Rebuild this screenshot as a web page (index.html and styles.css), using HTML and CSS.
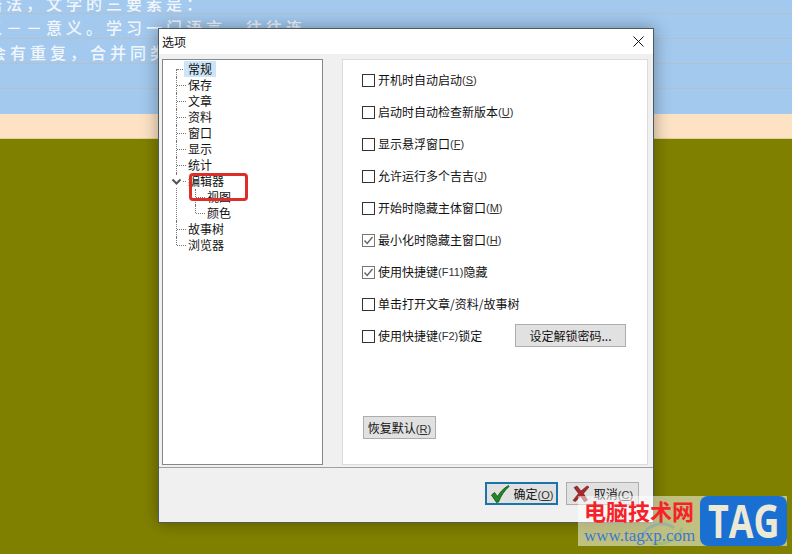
FILE: index.html
```html
<!DOCTYPE html>
<html lang="zh-CN">
<head>
    <meta charset="UTF-8">
    <title>选项</title>
    <link rel="stylesheet" href="styles.css">
</head>
<body>
    <div class="sky">
        <div class="line line-first"><span class="line-text">语法，文学的三要素是：</span></div>
        <div class="line"><span class="line-text">义－－意义。学习一门语言，往往连</span></div>
        <div class="line"><span class="line-text indent">会有重复，合并同类</span></div>
        <div class="line"></div>
    </div>
    <div class="peach"></div>
    <div class="olive"></div>

    <div class="dialog">
        <div class="titlebar">
            <span>选项</span>
            <svg class="close" width="11" height="11" viewBox="0 0 11 11"><path d="M0.5 0.5L10.5 10.5M10.5 0.5L0.5 10.5" stroke="#111" stroke-width="1" fill="none"/></svg>
        </div>
        <div class="dialog-body">
            <div class="tree-box">
                <ul class="tree">
                    <li><span class="node selected">常规</span></li>
                    <li><span class="node">保存</span></li>
                    <li><span class="node">文章</span></li>
                    <li><span class="node">资料</span></li>
                    <li><span class="node">窗口</span></li>
                    <li><span class="node">显示</span></li>
                    <li><span class="node">统计</span></li>
                    <li>
                        <svg class="chevron" width="11" height="11" viewBox="0 0 11 11"><path d="M1.5 3.5L5.5 7.5L9.5 3.5" stroke="#555" stroke-width="2" fill="none"/></svg>
                        <span class="node">编辑器</span>
                        <ul class="sub">
                            <li><span class="node">视图</span></li>
                            <li><span class="node">颜色</span></li>
                        </ul>
                    </li>
                    <li><span class="node">故事树</span></li>
                    <li><span class="node">浏览器</span></li>
                </ul>
                <div class="annotation"></div>
            </div>
            <div class="panel">
                <div class="option"><span class="box"></span>开机时自动启动<span class="key">(<u>S</u>)</span></div>
                <div class="option"><span class="box"></span>启动时自动检查新版本<span class="key">(<u>U</u>)</span></div>
                <div class="option"><span class="box"></span>显示悬浮窗口<span class="key">(<u>F</u>)</span></div>
                <div class="option"><span class="box"></span>允许运行多个吉吉<span class="key">(<u>J</u>)</span></div>
                <div class="option"><span class="box"></span>开始时隐藏主体窗口<span class="key">(<u>M</u>)</span></div>
                <div class="option"><span class="box on"><svg width="11" height="11" viewBox="0 0 11 11"><path d="M1.5 5.5L4.2 8.5L9.5 2" stroke="#666" stroke-width="1.4" fill="none"/></svg></span>最小化时隐藏主窗口<span class="key">(<u>H</u>)</span></div>
                <div class="option"><span class="box on"><svg width="11" height="11" viewBox="0 0 11 11"><path d="M1.5 5.5L4.2 8.5L9.5 2" stroke="#666" stroke-width="1.4" fill="none"/></svg></span>使用快捷键<span class="key">(F11)</span>隐藏</div>
                <div class="option"><span class="box"></span>单击打开文章/资料/故事树</div>
                <div class="option">
                    <span class="box"></span>使用快捷键<span class="key">(F2)</span>锁定
                    <button class="btn btn-password">设定解锁密码...</button>
                </div>
                <button class="btn btn-reset"><span>恢复默认<span class="key">(<u>R</u>)</span></span></button>
            </div>
        </div>
        <div class="footer">
            <button class="btn btn-footer btn-default">
                <svg width="20" height="18" viewBox="0 0 20 18"><path d="M1.5 10L4.5 7.5L7.5 11.5C10 7 13.5 3.5 18.5 0.5L19 1.5C14.5 5.5 11 10.5 8.5 17L6.5 17.5Z" fill="#1f8a22" stroke="#0c4a10" stroke-width="0.8"/></svg>
                <span>确定<span class="key">(<u>O</u>)</span></span>
            </button>
            <button class="btn btn-footer">
                <svg width="18" height="18" viewBox="0 0 18 18"><path d="M2 2.5L5 1L9 6L15 1L17 2L11.5 8.5L15.5 15L12.5 17L8.5 11L3.5 16.5L1 15.5L6.5 8.5Z" fill="#a8282c" stroke="#5e1a1c" stroke-width="0.6"/></svg>
                <span>取消<span class="key">(<u>C</u>)</span></span>
            </button>
        </div>
    </div>

    <div class="watermark">
        <svg class="wm-swirl" width="50" height="30" viewBox="0 0 50 30"><path d="M4 22C8 8 26 4 36 12" stroke="#5b9bd5" stroke-width="3" fill="none" opacity="0.35"/><path d="M14 27C26 30 40 24 44 12" stroke="#6fb56f" stroke-width="3" fill="none" opacity="0.35"/></svg>
        <div class="wm-text">
            <div class="wm-title">电脑技术网</div>
            <div class="wm-url">www.tagxp.com</div>
        </div>
        <div class="wm-badge"><span>TAG</span></div>
    </div>
</body>
</html>
```

FILE: styles.css
```css
html, body {
    margin: 0;
    height: 100%;
}

body {
    width: 792px;
    height: 554px;
    overflow: hidden;
    position: relative;
    display: flex;
    flex-direction: column;
    font-family: "Noto Sans CJK SC", "Liberation Sans", sans-serif;
    font-size: 12px;
    color: #111;
}

/* Background document */
.sky {
    height: 114px;
    flex: none;
    background-color: #a3c9ee;
    overflow: hidden;
}

.line {
    box-sizing: border-box;
    height: 25px;
    border-bottom: 1px solid #b4c0cc;
    white-space: nowrap;
    overflow: hidden;
}

.line-first {
    height: 14px;
}

.line-text {
    display: block;
    margin-top: 1px;
    margin-left: -14px;
    color: #fff;
    opacity: 0.85;
    font-size: 16px;
    font-weight: 500;
    letter-spacing: 4px;
    line-height: 24px;
}

.line-first .line-text {
    margin-top: -9px;
}

.line-text.indent {
    margin-left: -10px;
}

.peach {
    height: 25px;
    flex: none;
    background-color: #fde2c4;
    border-bottom: 1px solid #d8d49a;
    box-sizing: border-box;
}

.olive {
    flex: 1;
    background-color: #808000;
}

/* Options dialog */
.dialog {
    position: absolute;
    left: 158px;
    top: 28px;
    box-sizing: border-box;
    width: 496px;
    height: 495px;
    background-color: #f0f0f0;
    border: 1px solid #4d5a60;
    box-shadow: 0 0 16px rgba(0, 0, 0, 0.35);
    display: flex;
    flex-direction: column;
}

.titlebar {
    height: 25px;
    flex: none;
    background-color: #fff;
    display: flex;
    align-items: center;
    justify-content: space-between;
    padding: 0 9px 0 3px;
}

.dialog-body {
    display: flex;
    gap: 19px;
    padding: 5px 0 0 3px;
}

.tree-box {
    box-sizing: border-box;
    position: relative;
    width: 161px;
    height: 406px;
    background-color: #fff;
    border: 1px solid #828790;
}

.tree, .sub {
    list-style: none;
    margin: 0;
}

.tree {
    padding: 1px 0 0 13px;
}

.sub {
    padding: 0 0 0 19px;
}

.tree li {
    position: relative;
}

.tree li::after {
    content: "";
    position: absolute;
    left: 0;
    top: 0;
    height: 100%;
    border-left: 1px dotted #777;
}

.tree > li:first-child::after {
    top: 8px;
    height: calc(100% - 8px);
}

.tree > li:last-child::after,
.sub > li:last-child::after {
    height: 8px;
}

.node {
    position: relative;
    display: block;
    width: fit-content;
    height: 16px;
    line-height: 16px;
    margin-left: 8px;
    padding: 0 4px;
    white-space: nowrap;
}

.node::before {
    content: "";
    position: absolute;
    left: -7px;
    top: 8px;
    width: 9px;
    border-top: 1px dotted #777;
}

.node.selected {
    background-color: #cce4f7;
}

.node.selected::before {
    width: 6px;
}

.chevron {
    position: absolute;
    left: -5px;
    top: 3px;
    z-index: 1;
    background-color: #fff;
}

.annotation {
    position: absolute;
    left: 26px;
    top: 113px;
    box-sizing: border-box;
    width: 59px;
    height: 28px;
    border: 3px solid #dc2f2b;
    border-radius: 4px;
}

.panel {
    box-sizing: border-box;
    width: 306px;
    height: 406px;
    background-color: #fff;
    border: 1px solid #dcdcdc;
    padding: 12px 21px 0 19px;
    display: flex;
    flex-direction: column;
    gap: 17px;
}

.option {
    display: flex;
    align-items: center;
    height: 15px;
    white-space: nowrap;
}

.box {
    box-sizing: border-box;
    flex: none;
    width: 13px;
    height: 13px;
    margin-top: 1px;
    margin-right: 3px;
    border: 1px solid #333;
    background-color: #fff;
}

.box.on {
    border-color: #777;
}

.box svg {
    display: block;
}

.key {
    font-family: "Liberation Sans", sans-serif;
    font-size: 11px;
    color: #333;
}

.btn {
    box-sizing: border-box;
    height: 23px;
    padding: 0;
    background-color: #e1e1e1;
    border: 1px solid #adadad;
    font-family: inherit;
    font-size: 12px;
    color: #111;
    display: flex;
    align-items: center;
    justify-content: center;
}

.btn-password {
    flex: none;
    width: 111px;
    margin-left: auto;
}

.btn-reset {
    width: 73px;
    margin: 56px 0 0 1px;
}

.footer {
    box-sizing: border-box;
    flex: 1;
    margin-top: 2px;
    border-top: 1px solid #a0a0a0;
    padding: 14px 14px 0 0;
    display: flex;
    justify-content: flex-end;
    gap: 8px;
}

.btn-footer {
    width: 73px;
    gap: 4px;
}

.btn-default {
    border: 2px solid #1b75a8;
}

/* Site watermark */
.watermark {
    position: absolute;
    left: 578px;
    top: 496px;
    width: 209px;
    height: 50px;
    display: flex;
    justify-content: space-between;
    background-color: rgba(255, 255, 255, 0.5);
}

.wm-swirl {
    position: absolute;
    left: 60px;
    top: 20px;
}

.wm-text {
    position: relative;
    padding-left: 6px;
}

.wm-title {
    font-size: 22px;
    line-height: 26px;
    margin-top: 1px;
    font-weight: 700;
    color: #f5222a;
}

.wm-url {
    font-family: "Liberation Serif", serif;
    font-size: 17px;
    line-height: 18px;
    margin-top: 4px;
    color: #3b78d2;
}

.wm-badge {
    width: 87px;
    height: 50px;
    background-color: #1a6fd2;
    border-radius: 8px;
    color: #ece9d8;
    font-family: "Open Sans", sans-serif;
    font-weight: 700;
    font-size: 46px;
    line-height: 48px;
    text-align: center;
    overflow: hidden;
}

.wm-badge span {
    display: inline-block;
    margin: 0 -10px;
    transform: scaleX(0.78);
}
```
